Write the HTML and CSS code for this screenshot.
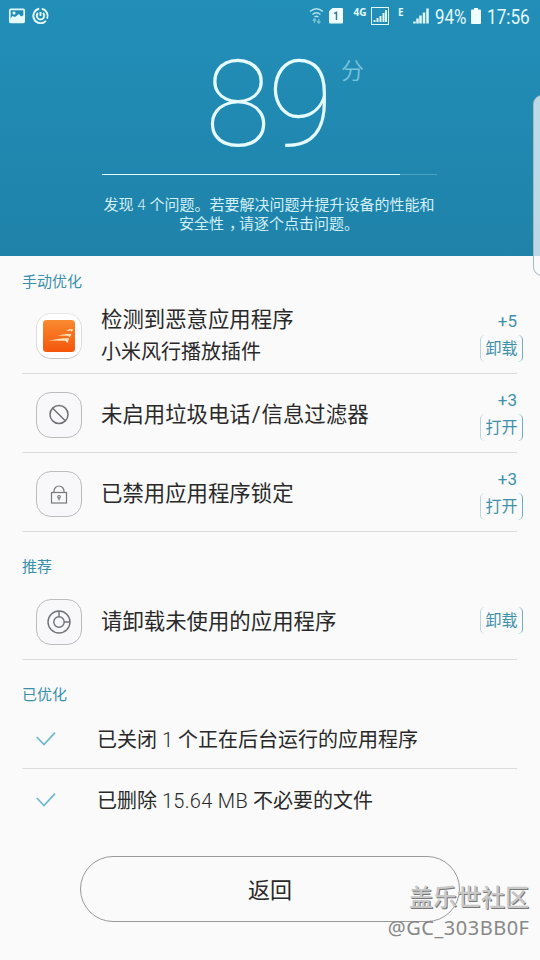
FILE: index.html
```html
<!DOCTYPE html>
<html lang="zh-CN">
<head>
<meta charset="utf-8">
<title>智能管理器</title>
<link rel="stylesheet" href="styles.css">
</head>
<body>
<header class="hero">
  <div class="status">
    <svg class="status-left" width="50" height="32" viewBox="0 0 50 32" fill="none" stroke="#e4fbff">
      <rect x="9.8" y="9.3" width="14.4" height="13" rx="1" stroke-width="1.7"/>
      <circle cx="14" cy="13" r="1.6" fill="#e4fbff" stroke="none"/>
      <path d="M10 19l2.500-3 2.500 1 4-3 2 2.500 3-1.500v7.500H10z" fill="#e4fbff" stroke="none"/>
      <path d="M41.800 8.700a7.300 7.300 0 0 1 5.300 10M46 20.800A7.300 7.300 0 1 1 39.200 8.700" stroke-width="1.900"/>
      <path d="M43 13a3.700 3.700 0 1 1-5 0M40.500 12v4" stroke-width="1.900"/>
    </svg>
    <div class="status-right">
      <svg width="136" height="32" viewBox="305 0 136 32" fill="none" stroke="#e4fbff">
        <g stroke-width="1.400" opacity=".75"><path d="M310 11.500q6.500-5.500 13 0M312.500 14.500q4-3.500 8 0M314.500 17q2-1.500 4 0"/><path d="M314.500 23v-4m-1.700 1.800l1.700-2 1.700 2M318.800 19v4m-1.700-1.800l1.700 2 1.700-2" stroke="#8cd2df"/></g>
        <path d="M332.500 8h9.500q1 0 1 1v13.500q0 1-1 1h-12q-1 0-1-1V11z" fill="#f0ffff" stroke="none"/>
        <path d="M334.200 13.500l2.300-1v7.500" stroke="#397d91" stroke-width="1.500"/>
        <rect x="371.500" y="7.500" width="17" height="17"/>
        <path d="M374.500 22v-2M377.500 22v-4M380.500 22v-6M383.500 22v-9M386 22V10" stroke-width="2"/>
        <path d="M414.500 23.500v-2M417.500 23.500v-5M420.500 23.500v-8M424 23.500v-11M427.500 23.500v-15" stroke-width="2.500"/>
        <text x="353.500" y="16" class="net">4G</text>
        <text x="398" y="16" class="net">E</text>
      </svg>
      <span class="pct">94%</span>
      <svg class="battery" width="10" height="16" viewBox="0 0 10 16" fill="#f0ffff"><path d="M3 0h4v1.500h2q1 0 1 1V15q0 1-1 1H1q-1 0-1-1V2.500q0-1 1-1h2z"/></svg>
      <span class="clock">17:56</span>
    </div>
  </div>
  <div class="score"><span class="number">89</span><span class="unit">分</span></div>
  <div class="progress"><div class="progress-fill"></div></div>
  <p class="summary">发现 <span class="thin">4</span> 个问题。若要解决问题并提升设备的性能和<br>安全性<span class="comma">，</span>请逐个点击问题。</p>
</header>
<main>
  <h2 class="first">手动优化</h2>
  <section class="row">
    <div class="tile app">
      <svg width="32" height="32" viewBox="0 0 32 32">
        <defs><linearGradient id="o" x1="0" y1="0" x2="0" y2="1"><stop offset="0" stop-color="#f98a30"/><stop offset="1" stop-color="#f5560c"/></linearGradient></defs>
        <rect width="32" height="32" rx="3.500" fill="url(#o)"/>
        <path d="M5 20.500l15.500-2.200h5.500l-1.500 5-2-2.600zM14.500 15.500l9-1.500h5l-1.700 3.500-1.800-1.800zM23 11l3-1.800h4l-1 2.800-1.500-1.500z" fill="#ffe6bd"/>
      </svg>
    </div>
    <div class="label"><div>检测到恶意应用程序</div><div class="sub">小米风行播放插件</div></div>
    <div class="action"><span class="gain">+5</span><span class="btn">卸载</span></div>
  </section>
  <section class="row">
    <div class="tile">
      <svg width="46" height="46" viewBox="0 0 46 46" fill="none" stroke="#707278" stroke-width="1.500"><circle cx="23" cy="22.500" r="9"/><path d="M16.500 16l13 13"/></svg>
    </div>
    <div class="label">未启用垃圾电话<span class="slash">/</span>信息过滤器</div>
    <div class="action"><span class="gain">+3</span><span class="btn">打开</span></div>
  </section>
  <section class="row">
    <div class="tile">
      <svg width="46" height="46" viewBox="0 0 46 46" fill="none" stroke="#77797e" stroke-width="1.200"><rect x="15.500" y="21.500" width="15" height="10.500"/><path d="M18 21.500v-1.500a5 5 0 0 1 10 0v1.500M23 27v2.500"/><circle cx="23" cy="25.800" r="1.300"/></svg>
    </div>
    <div class="label">已禁用应用程序锁定</div>
    <div class="action"><span class="gain">+3</span><span class="btn">打开</span></div>
  </section>
  <h2>推荐</h2>
  <section class="row">
    <div class="tile">
      <svg width="46" height="46" viewBox="0 0 46 46" fill="none" stroke="#707278" stroke-width="1.400"><circle cx="23" cy="23" r="11"/><circle cx="23" cy="23" r="5.200"/><path d="M23 12v5.800M28.200 23H34"/></svg>
    </div>
    <div class="label">请卸载未使用的应用程序</div>
    <div class="action single"><span class="btn">卸载</span></div>
  </section>
  <h2>已优化</h2>
  <section class="done">
    <svg width="20" height="14" viewBox="0 0 20 14"><path d="M.8 5l7.200 7.500L19 .7"/></svg>
    <span>已关闭 <span class="thin">1</span> 个正在后台运行的应用程序</span>
  </section>
  <section class="done last">
    <svg width="20" height="14" viewBox="0 0 20 14"><path d="M.8 5l7.200 7.500L19 .7"/></svg>
    <span>已删除 <span class="thin size">15.64 MB</span> 不必要的文件</span>
  </section>
  <div class="back">返回</div>
</main>
<div class="edge"></div>
<div class="watermark"><div class="community">盖乐世社区</div><div class="user">@GC_303BB0F</div></div>
</body>
</html>
```
FILE: styles.css
```css
* { box-sizing: border-box; }
body {
  position: relative;
  margin: 0;
  width: 540px;
  height: 960px;
  overflow: hidden;
  background: #fafafa;
  color: #292929;
  font-family: Roboto, "Noto Sans CJK SC", sans-serif;
}
svg { display: block; flex: none; }
.hero {
  height: 256px;
  background: linear-gradient(#228fb9, #1f82a9);
  color: #e4fbff;
}
.status { display: flex; justify-content: space-between; height: 32px; }
.status-right { display: flex; align-items: center; padding-right: 11px; }
.net { font: bold 10px "Noto Sans", sans-serif; fill: #e4fbff; stroke: none; }
.pct, .clock { display: block; font-size: 19.5px; line-height: 32px; white-space: nowrap; transform-origin: left; }
.pct { width: 30px; margin-left: -6px; padding-top: 3px; transform: scaleX(.87); }
.battery { margin-left: 6px; }
.clock { width: 42px; margin-left: 6px; padding-top: 3px; transform: scaleX(.88); }
.score { display: flex; height: 142px; padding-left: 205px; }
.number { width: 130px; padding-top: 2px; font-size: 120px; line-height: 142px; font-weight: 100; letter-spacing: -3px; }
.unit { margin: 23px 0 0 6px; font-size: 23px; line-height: 34px; font-weight: 350; color: #77c4dc; }
.progress { width: 335px; height: 1px; margin: 0 0 0 102px; background: #4aa3c1; }
.progress-fill { width: 298px; height: 1px; background: #e0ffff; }
.summary { margin: 21px 0 0; padding-right: 2px; text-align: center; font-size: 15px; line-height: 19px; font-weight: 400; color: #d2f0f7; white-space: nowrap; }
.comma { padding: 0 2.5px 0 5px; font-family: "Noto Sans CJK SC", sans-serif; font-feature-settings: "halt"; line-height: 1; }
.thin { font-weight: 300; }
h2 { margin: 0; padding: 24px 0 0 22px; height: 49px; font-size: 15px; line-height: 22px; font-weight: 400; color: #3990aa; }
.first { padding-top: 15px; height: 39px; }
.row {
  display: flex;
  align-items: center;
  height: 79px;
  margin: 0 23px 0 22px;
  border-bottom: 1px solid #dcdcdc;
}
.tile {
  display: flex;
  align-items: center;
  justify-content: center;
  flex: none;
  width: 46px;
  height: 46px;
  margin: 4px 19px 0 14px;
  border: 1px solid #bcbcbe;
  border-radius: 15px;
  background: #f8f8fa;
}
.app { background: #fff; border-color: #e6e6e6 #ddd #c6c6c6; }
.label { flex: 1; padding-top: 4px; font-size: 21.4px; line-height: 32px; white-space: nowrap; }
.slash { padding: 0 1px; }
.sub { font-size: 20px; }
.action { display: flex; flex-direction: column; align-items: flex-end; padding-top: 4px; margin-right: -6px; color: #3e91ab; }
.single { padding-top: 0; margin-top: -4px; }
.gain { margin-right: 6px; font-size: 17px; line-height: 20px; }
.btn {
  width: 43px;
  height: 27px;
  margin-top: 4px;
  border: solid #b8d7df;
  border-width: 0 1px;
  border-right-color: #6caec1;
  border-radius: 5px;
  text-align: center;
  font-size: 16px;
  line-height: 27px;
}
.done { display: flex; align-items: center; height: 60px; margin: 0 23px 0 22px; padding-left: 14px; border-bottom: 1px solid #dcdcdc; font-size: 20px; white-space: nowrap; }
.done svg { margin-right: 41px; fill: none; stroke: #6cb9cf; stroke-width: 1.7; }
.size { letter-spacing: .3px; }
.last { height: 61px; border: 0; }
.back { width: 380px; height: 66px; margin: 26px 0 0 80px; border: 1px solid #999; border-radius: 33px; text-align: center; font-size: 22px; line-height: 67px; }
.edge { position: absolute; top: 95px; left: 533px; width: 20px; height: 181px; border: 1px solid #aaa; border-color: #a4b8bf; border-radius: 9px; background: rgba(250,250,250,.72); }
.watermark { position: absolute; right: 11px; top: 883px; text-align: right; color: #888; white-space: nowrap; }
.community { font-size: 24px; line-height: 30px; font-weight: 500; color: #c8c8c8; text-shadow: 1px 1px 0 #777; }
.user { font-family: "Noto Sans", sans-serif; font-size: 20px; line-height: 30px; letter-spacing: .5px; margin-right: -.5px; color: #888; }
```
